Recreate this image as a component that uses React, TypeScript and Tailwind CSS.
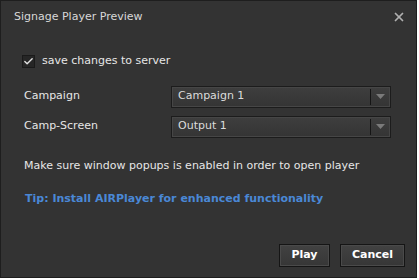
import { X, Check } from "lucide-react";

function Select({ value }: { value: string }) {
  return (
    <div className="w-[220px] h-[22px] flex items-center border border-[#1c1c1c] bg-gradient-to-b from-[#3e3e3e] to-[#343434] shadow-[inset_0_0_0_1px_#464646]">
      <span className="flex-1 pl-[6px] text-[11px] text-[#dcdcdc]">{value}</span>
      <div className="w-px h-[16px] bg-[#151515] mr-[5px]" />
      <svg width="9" height="6" viewBox="0 0 9 6" className="mr-[5px]">
        <path d="M0 0 H9 L4.5 5 Z" fill="#7a7a7a" />
      </svg>
    </div>
  );
}

function Btn({ label, w }: { label: string; w: string }) {
  return (
    <button className={`${w} h-[23px] border border-[#151515] bg-gradient-to-b from-[#424242] to-[#363636] shadow-[inset_0_0_0_1px_#4a4a4a] text-[11px] font-bold text-white`}>
      {label}
    </button>
  );
}

export default function App() {
  return (
    <div className="w-[419px] h-[280px] bg-white font-['DejaVu_Sans',sans-serif]">
      <div className="w-[417px] h-[278px] bg-[#333333] border border-[#1e1e1e] flex flex-col">
        {/* title bar */}
        <div className="h-[32px] flex items-center justify-between pl-[13px] pr-[10px]">
          <span className="text-[11px] text-[#d8d8d8]">Signage Player Preview</span>
          <X size={14} strokeWidth={3} className="text-[#b0b0b0]" />
        </div>

        <div className="flex flex-col pl-[21px] pt-[20px]">
          <label className="flex items-center gap-[7px]">
            <span className="w-[13px] h-[13px] bg-[#262626] border border-[#1a1a1a] flex items-center justify-center">
              <Check size={11} strokeWidth={3} className="text-[#e0e0e0]" />
            </span>
            <span className="text-[11px] text-[#e6e6e6]">save changes to server</span>
          </label>

          <div className="flex items-center mt-[16px]">
            <span className="w-[149px] pl-[2px] text-[11px] text-[#e6e6e6]">Campaign</span>
            <Select value="Campaign 1" />
          </div>
          <div className="flex items-center mt-[8px]">
            <span className="w-[149px] pl-[2px] text-[11px] text-[#e6e6e6]">Camp-Screen</span>
            <Select value="Output 1" />
          </div>

          <p className="mt-[20px] pl-[2px] text-[11px] text-[#e6e6e6]">
            Make sure window popups is enabled in order to open player
          </p>
          <p className="mt-[17px] pl-[3px] text-[11px] font-bold text-[#4a88d6]">
            Tip: Install AIRPlayer for enhanced functionality
          </p>
        </div>

        <div className="mt-auto flex justify-end gap-[10px] pr-[11px] pb-[10px]">
          <Btn label="Play" w="w-[51px]" />
          <Btn label="Cancel" w="w-[65px]" />
        </div>
      </div>
    </div>
  );
}
